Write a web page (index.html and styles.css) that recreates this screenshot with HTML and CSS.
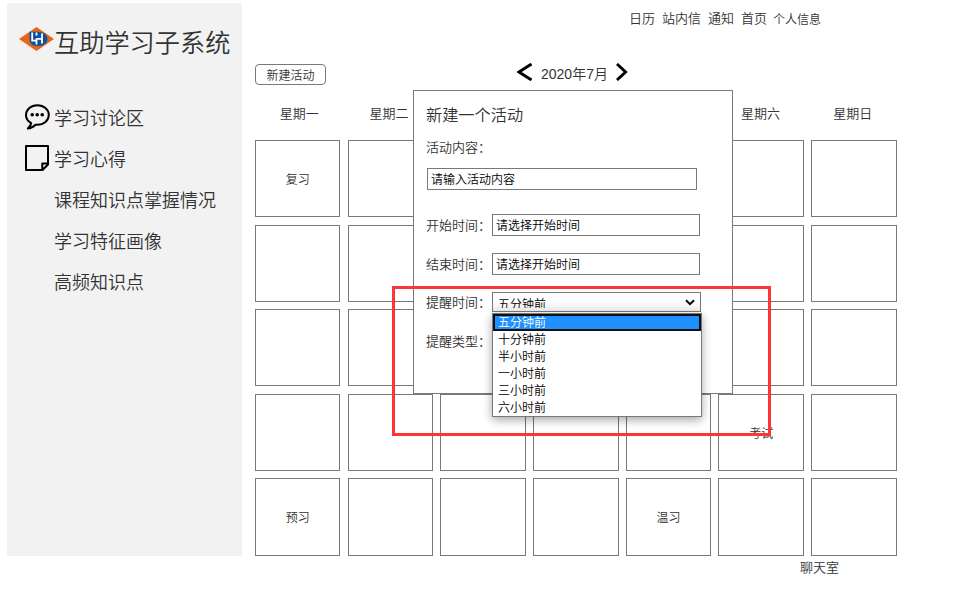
FILE: index.html
```
<!DOCTYPE html>
<html lang="zh-CN">
<head>
    <meta charset="UTF-8">
    <meta name="viewport" content="width=device-width, initial-scale=1.0">
    <title>互助学习子系统</title>
    <link rel="stylesheet" href="styles.css">
</head>
<body>
    <div class="page">
        <div class="sidebar">
            <div class="brand">
                <svg class="logo" width="35" height="24" viewBox="0 0 35 24">
                    <path d="M17.5 0 L35 12 L17.5 24 L0 12 Z" fill="#e8641b"/>
                    <path d="M10.5 4.7 H19 Q28.5 5.7 28.5 12 Q28.5 18.5 19 19 H17 Q10.5 18 10.5 12 Z" fill="#0a539f"/>
                    <path d="M13.2 5.5 V13.6 H17.5 M17.5 5.5 V8.5 M17.5 11.5 V17.5 M17.5 11.8 H23 M23 6.5 V16.5" fill="none" stroke="#fff" stroke-width="1.8"/>
                </svg>
                <span class="brand-name">互助学习子系统</span>
            </div>
            <div class="menu">
                <div class="menu-item">
                    <svg class="menu-icon" width="25" height="26" viewBox="0 0 25 26">
                        <path d="M6.2 19.2 C3 17.4 1 14.6 1 11.3 C1 5.6 6 1.2 12.3 1.2 C18.8 1.2 23.8 5.5 23.8 11 C23.8 16.6 18.8 20.8 12.3 20.8 H10.5 C8.6 22.8 6 24.3 2.8 24.5 C4.7 22.9 5.8 21.2 6.2 19.2 Z" fill="none" stroke="#000" stroke-width="2" stroke-linejoin="round"/>
                        <circle cx="7.2" cy="10.7" r="1.8"/>
                        <circle cx="12.2" cy="10.7" r="1.8"/>
                        <circle cx="17.2" cy="10.7" r="1.8"/>
                    </svg>
                    <span>学习讨论区</span>
                </div>
                <div class="menu-item">
                    <svg class="menu-icon" width="25" height="26" viewBox="0 0 25 26">
                        <path d="M1 1 H23 V19.5 L17.5 25 H1 Z M17.3 25 V18.5 H23" fill="none" stroke="#000" stroke-width="2" stroke-linejoin="round"/>
                    </svg>
                    <span>学习心得</span>
                </div>
                <div class="menu-item">课程知识点掌握情况</div>
                <div class="menu-item">学习特征画像</div>
                <div class="menu-item">高频知识点</div>
            </div>
        </div>

        <div class="main">
            <div class="nav">
                <span>日历</span>
                <span>站内信</span>
                <span>通知</span>
                <span>首页</span>
                <span class="nav-user">个人信息</span>
            </div>

            <div class="toolbar">
                <button class="new-btn">新建活动</button>
                <div class="month">
                    <svg width="16" height="18" viewBox="0 0 16 18">
                        <path d="M14.5 1 L2 9 L14.5 17" fill="none" stroke="#000" stroke-width="2.9"/>
                    </svg>
                    <span>2020年7月</span>
                    <svg width="12" height="18" viewBox="0 0 12 18">
                        <path d="M1 1 L9.6 9 L1 17" fill="none" stroke="#000" stroke-width="2.9"/>
                    </svg>
                </div>
            </div>

            <div class="weekdays">
                <span>星期一</span>
                <span class="tuesday">星期二</span>
                <span></span>
                <span></span>
                <span></span>
                <span>星期六</span>
                <span>星期日</span>
            </div>

            <div class="calendar">
                <div class="day">复习</div>
                <div class="day"></div>
                <div class="day"></div>
                <div class="day"></div>
                <div class="day"></div>
                <div class="day"></div>
                <div class="day"></div>

                <div class="day"></div>
                <div class="day"></div>
                <div class="day"></div>
                <div class="day"></div>
                <div class="day"></div>
                <div class="day"></div>
                <div class="day"></div>

                <div class="day"></div>
                <div class="day"></div>
                <div class="day"></div>
                <div class="day"></div>
                <div class="day"></div>
                <div class="day"></div>
                <div class="day"></div>

                <div class="day"></div>
                <div class="day"></div>
                <div class="day"></div>
                <div class="day"></div>
                <div class="day"></div>
                <div class="day">考试</div>
                <div class="day"></div>

                <div class="day">预习</div>
                <div class="day"></div>
                <div class="day"></div>
                <div class="day"></div>
                <div class="day">温习</div>
                <div class="day"></div>
                <div class="day"></div>
            </div>

            <div class="chat">聊天室</div>
        </div>

        <div class="modal">
            <div class="modal-title">新建一个活动</div>
            <div class="modal-label">活动内容：</div>
            <div class="field field-content">请输入活动内容</div>
            <div class="form-row">
                <span class="form-label">开始时间：</span>
                <div class="field">请选择开始时间</div>
            </div>
            <div class="form-row">
                <span class="form-label">结束时间：</span>
                <div class="field">请选择开始时间</div>
            </div>
            <div class="form-row">
                <span class="form-label">提醒时间：</span>
                <div class="select">
                    <div class="select-box">
                        <span class="select-text">五分钟前</span>
                        <svg class="select-arrow" width="10" height="7" viewBox="0 0 10 7">
                            <path d="M1 1.2 L5 5.2 L9 1.2" fill="none" stroke="#000" stroke-width="2"/>
                        </svg>
                    </div>
                    <div class="options">
                        <div class="option selected">五分钟前</div>
                        <div class="option">十分钟前</div>
                        <div class="option">半小时前</div>
                        <div class="option">一小时前</div>
                        <div class="option">三小时前</div>
                        <div class="option">六小时前</div>
                    </div>
                </div>
            </div>
            <div class="form-row">
                <span class="form-label">提醒类型：</span>
            </div>
        </div>

        <div class="highlight"></div>
    </div>
</body>
</html>
```
FILE: styles.css
```
* {
    box-sizing: border-box;
}

body {
    margin: 0;
    background: #fff;
    color: #333;
    font-family: "Liberation Sans", "Noto Sans CJK SC", sans-serif;
    font-size: 13px;
    font-weight: 350;
}

svg {
    display: block;
    flex-shrink: 0;
}

.page {
    position: relative;
    display: flex;
    gap: 13px;
    width: 966px;
    height: 589px;
    padding: 3px 0 0 7px;
    overflow: hidden;
}

/* sidebar */
.sidebar {
    width: 235px;
    height: 553px;
    background: #f2f2f2;
}

.brand {
    display: flex;
    align-items: flex-start;
    height: 74px;
    padding: 24px 0 0 12px;
}

.brand-name {
    font-size: 25.2px;
    line-height: 32px;
    white-space: nowrap;
}

.menu {
    padding: 22px 0 0 18px;
}

.menu-item {
    display: flex;
    align-items: center;
    height: 41px;
    padding-left: 29px;
    font-size: 18px;
    line-height: 41px;
    white-space: nowrap;
}

.menu-icon {
    margin: 0 4px 5px -29px;
}

/* calendar */
.main {
    width: 642px;
}

.nav {
    display: flex;
    gap: 7px;
    height: 61px;
    padding: 6px 0 0 374px;
    line-height: 20px;
}

.nav-user {
    margin: 1px 0 0 -1px;
    font-size: 12px;
}

.toolbar {
    display: flex;
    align-items: flex-start;
    gap: 191px;
    height: 40px;
}

.new-btn {
    width: 71px;
    height: 21px;
    padding: 3px 0 0;
    border: 1px solid #797979;
    border-radius: 4px;
    background: #fff;
    color: #333;
    font-family: inherit;
    font-size: 12px;
    font-weight: inherit;
    line-height: 16px;
}

.month {
    display: flex;
    gap: 8px;
    margin-top: -1px;
    font-size: 14px;
    line-height: 22px;
}

.weekdays {
    display: grid;
    grid-template-columns: repeat(7, 1fr);
    width: 646px;
    height: 36px;
    margin-left: -2px;
    line-height: 20px;
    text-align: center;
}

.tuesday {
    padding-right: 5px;
}

.calendar {
    display: grid;
    grid-template-columns: repeat(7, 1fr);
    grid-auto-rows: 77.2px;
    gap: 7.4px 7.2px;
    width: 641.6px;
}

.day {
    display: flex;
    align-items: center;
    justify-content: center;
    border: 1px solid #797979;
    font-size: 12px;
}

.chat {
    padding: 2px 0 0 545px;
    line-height: 20px;
}

/* new activity dialog */
.modal {
    position: absolute;
    left: 413px;
    top: 90px;
    width: 320px;
    height: 304px;
    padding: 14px 0 0 13px;
    border: 1px solid #797979;
    background: #fff;
}

.modal-title {
    margin-left: -1px;
    font-size: 16.2px;
    line-height: 21px;
}

.modal-label {
    margin: 11px 0 10px -1px;
    line-height: 21px;
}

.field {
    width: 208px;
    height: 22px;
    padding-left: 3px;
    border: 1px solid #797979;
    color: #000;
    font-size: 12px;
    line-height: 22px;
}

.field-content {
    width: 270px;
    margin-bottom: 16px;
}

.form-row {
    display: flex;
    align-items: center;
    height: 38.5px;
}

.form-label {
    width: 66px;
    margin: 0 0 1px -1px;
    white-space: nowrap;
}

.select {
    position: relative;
    color: #000;
    font-size: 12px;
}

.select-box {
    display: flex;
    justify-content: space-between;
    width: 209px;
    height: 20px;
    padding: 0 5px;
    border: 1px solid #797979;
    background: linear-gradient(#fff 40%, #efefef);
}

.select-text {
    height: 15px;
    line-height: 24px;
    overflow: hidden;
}

.select-arrow {
    margin-top: 6px;
}

.options {
    position: absolute;
    left: 0;
    top: 21px;
    z-index: 1;
    width: 210px;
    height: 104px;
    border: 1px solid #797979;
    background: #fff;
    box-shadow: 0 3px 9px rgba(0, 0, 0, 0.35);
}

.option {
    height: 17px;
    padding-left: 5px;
    line-height: 18px;
}

.option.selected {
    padding-left: 3px;
    border: 2px solid #101010;
    background: #1e90ff;
    color: #fff;
    line-height: 14px;
}

/* marks the reminder setting */
.highlight {
    position: absolute;
    left: 392px;
    top: 286px;
    width: 379px;
    height: 150px;
    border: 3px solid #fc3636;
}
```
